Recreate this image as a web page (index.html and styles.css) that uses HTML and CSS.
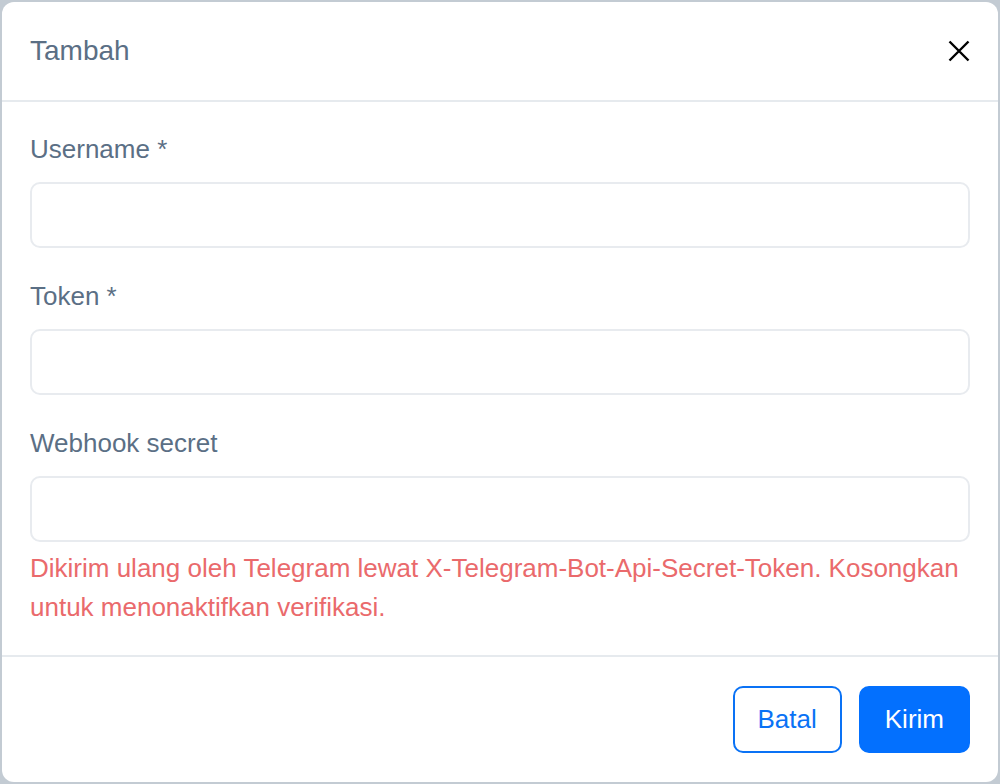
FILE: index.html
```html
<!DOCTYPE html>
<html lang="id">
<head>
<meta charset="utf-8">
<title>Tambah</title>
<link rel="stylesheet" href="styles.css">
</head>
<body>
<div class="modal">
  <div class="modal-header">
    <h2 class="modal-title">Tambah</h2>
    <button class="close" aria-label="Close">
      <svg width="22" height="22" viewBox="0 0 22 22"><path d="M1.5 1.5 L20.5 20.5 M20.5 1.5 L1.5 20.5" stroke="#000" stroke-width="2.4" fill="none"/></svg>
    </button>
  </div>
  <div class="modal-body">
    <div class="field">
      <label class="label">Username *</label>
      <input class="input" type="text">
    </div>
    <div class="field">
      <label class="label">Token *</label>
      <input class="input" type="text">
    </div>
    <div class="field">
      <label class="label">Webhook secret</label>
      <input class="input" type="text">
      <p class="help">Dikirim ulang oleh Telegram lewat X-Telegram-Bot-Api-Secret-Token. Kosongkan untuk menonaktifkan verifikasi.</p>
    </div>
  </div>
  <div class="modal-footer">
    <button class="btn btn-outline">Batal</button>
    <button class="btn btn-primary">Kirim</button>
  </div>
</div>
</body>
</html>
```

FILE: styles.css
```css
html, body {
  margin: 0;
  padding: 0;
  height: 100%;
}
body {
  background: #c3cbd3;
  font-family: "Liberation Sans", Arial, sans-serif;
  padding: 2px;
  box-sizing: border-box;
  height: 784px;
}
.modal {
  background: #fff;
  border-radius: 12px;
  height: 780px;
  display: flex;
  flex-direction: column;
  overflow: hidden;
}
.modal-header {
  height: 98px;
  border-bottom: 2px solid #e6eaee;
  display: flex;
  align-items: center;
  justify-content: space-between;
  padding: 0 28px;
}
.modal-title {
  margin: 0;
  font-weight: normal;
  font-size: 28px;
  color: #5b6f85;
}
.close {
  background: none;
  border: 0;
  padding: 0;
  width: 22px;
  height: 22px;
  display: flex;
}
.modal-body {
  padding: 28px 28px 28px;
  display: flex;
  flex-direction: column;
  gap: 29px;
}
.field {
  display: flex;
  flex-direction: column;
}
.label {
  font-size: 26px;
  line-height: 38px;
  color: #5b6f85;
  margin-bottom: 14px;
}
.input {
  height: 66px;
  box-sizing: border-box;
  border: 2px solid #e8ebef;
  border-radius: 10px;
  font-size: 24px;
  padding: 0 16px;
  outline: none;
}
.help {
  margin: 7px 0 0;
  font-size: 26px;
  line-height: 39px;
  color: #ea6a6c;
}
.modal-footer {
  border-top: 2px solid #e6eaee;
  flex: 1;
  display: flex;
  justify-content: flex-end;
  align-items: center;
  gap: 17px;
  padding: 0 28px;
}
.btn {
  height: 67px;
  border-radius: 10px;
  font-family: "Liberation Sans", Arial, sans-serif;
  font-size: 26px;
  padding: 0 23px;
  box-sizing: border-box;
}
.btn-outline {
  background: #fff;
  border: 2px solid #0a72f5;
  color: #0a72f5;
}
.btn-primary {
  background: #0370fe;
  border: 2px solid #0370fe;
  color: #fff;
  padding: 0 24px;
}
```
